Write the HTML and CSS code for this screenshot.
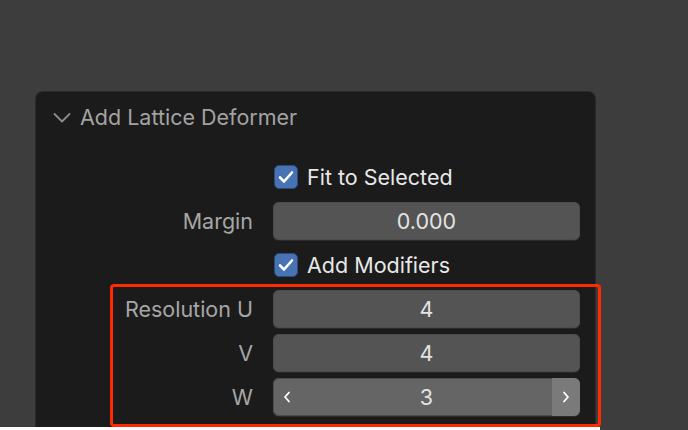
FILE: index.html
```html
<!DOCTYPE html>
<html>
<head>
<meta charset="utf-8">
<link rel="stylesheet" href="styles.css">
</head>
<body>
<div class="stage">
  <div class="panel">
    <div class="header">
      <svg class="chev" width="18" height="12" viewBox="0 0 18 12"><path d="M1.5 2 L9 9.5 L16.5 2" fill="none" stroke="#8c8c8c" stroke-width="1.8" stroke-linecap="round" stroke-linejoin="round"/></svg>
      <span class="title">Add Lattice Deformer</span>
    </div>
    <div class="grid">
      <div class="label"></div>
      <div class="check"><span class="box"><svg width="16" height="14" viewBox="0 0 16 14"><path d="M2 7.5 L6 11.5 L14 2.5" fill="none" stroke="#fff" stroke-width="2.6" stroke-linecap="round" stroke-linejoin="round"/></svg></span><span class="ctext">Fit to Selected</span></div>

      <div class="label">Margin</div>
      <div class="field">0.000</div>

      <div class="label"></div>
      <div class="check"><span class="box"><svg width="16" height="14" viewBox="0 0 16 14"><path d="M2 7.5 L6 11.5 L14 2.5" fill="none" stroke="#fff" stroke-width="2.6" stroke-linecap="round" stroke-linejoin="round"/></svg></span><span class="ctext">Add Modifiers</span></div>

      <div class="label">Resolution U</div>
      <div class="field">4</div>

      <div class="label">V</div>
      <div class="field">4</div>

      <div class="label">W</div>
      <div class="field hover">
        <span class="arrow left"><svg width="8" height="12" viewBox="0 0 8 12"><path d="M6 1.5 L2 6 L6 10.5" fill="none" stroke="#fff" stroke-width="1.8" stroke-linecap="round" stroke-linejoin="round"/></svg></span>
        <span class="val">3</span>
        <span class="arrow right"><svg width="8" height="12" viewBox="0 0 8 12"><path d="M2 1.5 L6 6 L2 10.5" fill="none" stroke="#fff" stroke-width="1.8" stroke-linecap="round" stroke-linejoin="round"/></svg></span>
      </div>
    </div>
    <div class="highlight"></div>
  </div>
</div>
<div class="strip"></div>
</body>
</html>
```

FILE: styles.css
```css
html, body {
  margin: 0;
  padding: 0;
  background: #3d3d3d;
  overflow: hidden;
}
body {
  width: 688px;
  height: 430px;
  position: relative;
  font-family: Inter, "Noto Sans", sans-serif;
}
.stage {
  padding: 92px 0 0 36px;
}
.panel {
  position: relative;
  width: 559px;
  height: 338px;
  background: #1b1b1b;
  border-radius: 7px 7px 0 0;
  box-shadow: 0 0 0 1px #2a2a2a;
}
.header {
  display: flex;
  align-items: center;
  height: 50px;
  padding-left: 17px;
  gap: 9px;
}
.chev {
  margin-top: 1px;
}
.title {
  font-size: 21.5px;
  color: #a3a3a3;
}
.grid {
  display: grid;
  grid-template-columns: 217px 307px;
  column-gap: 20px;
  row-gap: 6px;
  grid-auto-rows: 38px;
  margin-top: 16px;
}
.label {
  text-align: right;
  font-size: 21.5px;
  color: #a6a6a6;
  line-height: 38px;
}
.check {
  display: flex;
  align-items: center;
  gap: 9px;
  padding-left: 1px;
}
.box {
  width: 24px;
  height: 24px;
  box-sizing: border-box;
  border-radius: 5px;
  background: #4772b3;
  border: 1px solid #2e4a75;
  display: flex;
  align-items: center;
  justify-content: center;
}
.ctext {
  font-size: 21.5px;
  color: #e8e8e8;
}
.field {
  background: #545454;
  border-radius: 6px;
  box-shadow: 0 1px 0 #2a2a2a, inset 0 0 0 1px #4c4c4c;
  color: #e3e3e3;
  font-size: 21.5px;
  text-align: center;
  line-height: 38px;
}
.field.hover {
  background: #656565;
  display: flex;
  align-items: stretch;
  overflow: hidden;
}
.arrow {
  width: 28px;
  display: flex;
  align-items: center;
  justify-content: center;
}
.arrow.right {
  background: #7a7a7a;
}
.val {
  flex: 1;
}
.highlight {
  position: absolute;
  left: 74px;
  top: 192px;
  width: 491px;
  height: 143px;
  box-sizing: border-box;
  border: 3px solid #ff2a00;
  border-radius: 4px;
}
.strip {
  position: absolute;
  left: 0;
  bottom: 0;
  width: 600px;
  height: 3px;
  background: #ffffff;
}
```
